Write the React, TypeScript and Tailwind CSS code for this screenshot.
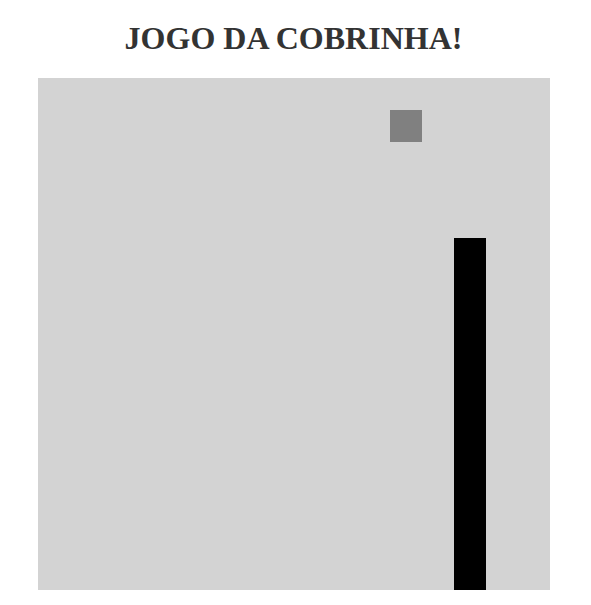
const CELL = 32

const food = { x: 11, y: 1 }
const snake = Array.from({ length: 11 }, (_, i) => ({ x: 13, y: 5 + i }))

export default function App() {
  return (
    <div className="w-[591px] h-[605px] bg-white overflow-hidden font-['Liberation_Serif',serif]">
      <h1 className="w-[587px] pt-[20px] text-center text-[32px] leading-[37px] font-bold text-[#333]">
        JOGO DA COBRINHA!
      </h1>
      <div className="relative ml-[38px] mt-[21px] w-[512px] h-[512px] bg-[#d3d3d3]">
        <div
          className="absolute bg-[#808080]"
          style={{ left: food.x * CELL, top: food.y * CELL, width: CELL, height: CELL }}
        />
        {snake.map((s, i) => (
          <div
            key={i}
            className="absolute bg-black"
            style={{ left: s.x * CELL, top: s.y * CELL, width: CELL, height: CELL }}
          />
        ))}
      </div>
    </div>
  )
}
